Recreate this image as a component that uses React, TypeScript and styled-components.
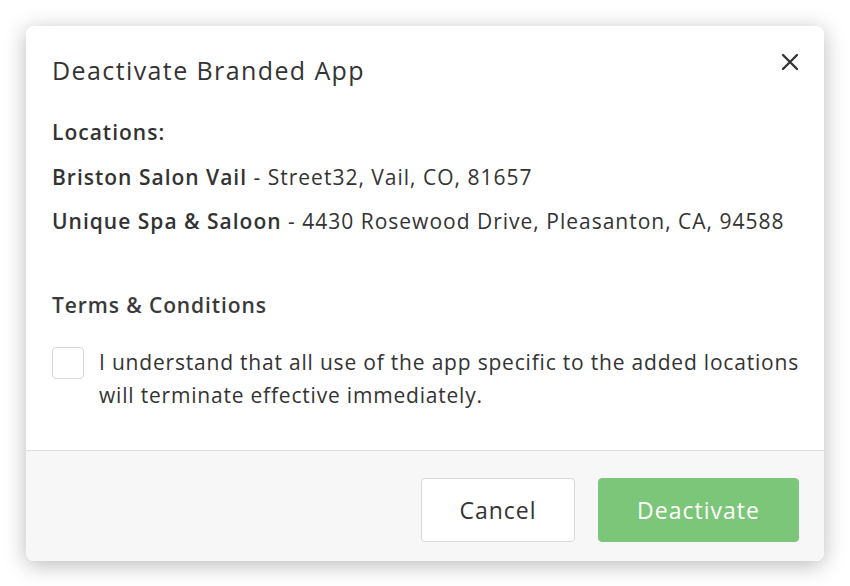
import styled, { createGlobalStyle } from "styled-components";

const GlobalStyle = createGlobalStyle`
  html, body {
    margin: 0;
    padding: 0;
    background: #ffffff;
    font-family: "Open Sans", "Lato", sans-serif;
    color: #333333;
  }
`;

const Page = styled.div`
  width: 850px;
  height: 586px;
  padding: 26px 26px 0 26px;
  box-sizing: border-box;
`;

const Modal = styled.div`
  width: 798px;
  height: 535px;
  background: #ffffff;
  border-radius: 8px;
  box-shadow: 0 4px 22px rgba(0, 0, 0, 0.28);
  display: flex;
  flex-direction: column;
  overflow: hidden;
`;

const Header = styled.div`
  display: flex;
  justify-content: space-between;
  align-items: flex-start;
  padding: 28px 22px 0 26px;
`;

const Title = styled.h2`
  margin: 0;
  font-size: 25px;
  font-weight: 400;
  line-height: 32px;
  letter-spacing: 1.4px;
`;

const CloseButton = styled.button`
  border: none;
  background: none;
  padding: 0;
  margin-top: -4px;
  width: 24px;
  height: 24px;
  display: flex;
  align-items: center;
  justify-content: center;
  cursor: pointer;
`;

const Body = styled.div`
  flex: 1;
  padding: 0 18px 0 26px;
  display: flex;
  flex-direction: column;
`;

const Line = styled.p<{ $top: number }>`
  margin: ${(p) => p.$top}px 0 0 0;
  font-size: 21px;
  line-height: 28px;
  letter-spacing: 1px;
  color: #333333;
  white-space: nowrap;
`;

const Strong = styled.span`
  font-weight: 600;
`;

const SectionTitle = styled.p`
  margin: 56px 0 0 0;
  font-size: 21px;
  line-height: 28px;
  letter-spacing: 0.9px;
  font-weight: 600;
  color: #3a3a3a;
`;

const CheckRow = styled.label`
  display: flex;
  gap: 15px;
  margin-top: 27px;
  cursor: pointer;
`;

const Box = styled.span`
  flex: none;
  width: 30px;
  height: 30px;
  border: 1px solid #d6d6d6;
  border-radius: 4px;
  background: #ffffff;
  margin-top: 1px;
`;

const CheckText = styled.span`
  font-size: 21px;
  line-height: 33px;
  letter-spacing: 0.8px;
`;

const Footer = styled.div`
  height: 111px;
  border-top: 1px solid #dedede;
  background: #f7f7f7;
  display: flex;
  justify-content: flex-end;
  align-items: flex-start;
  gap: 23px;
  padding: 27px 25px 0 0;
  box-sizing: border-box;
`;

const Button = styled.button<{ $primary?: boolean }>`
  height: 64px;
  width: ${(p) => (p.$primary ? "201px" : "154px")};
  border-radius: 4px;
  font-family: "Open Sans", "Lato", sans-serif;
  font-size: 23px;
  letter-spacing: 1px;
  cursor: pointer;
  border: 1px solid ${(p) => (p.$primary ? "#7cc67a" : "#d9d9d9")};
  background: ${(p) => (p.$primary ? "#7cc67a" : "#ffffff")};
  color: ${(p) => (p.$primary ? "#ffffff" : "#333333")};
`;

export default function App() {
  return (
    <>
      <GlobalStyle />
      <Page>
        <Modal>
          <Header>
            <Title>Deactivate Branded App</Title>
            <CloseButton aria-label="Close">
              <svg width="18" height="18" viewBox="0 0 18 18">
                <path d="M2 2 L16 16 M16 2 L2 16" stroke="#333" strokeWidth="2.4" strokeLinecap="round" />
              </svg>
            </CloseButton>
          </Header>
          <Body>
            <Line $top={32}>
              <Strong>Locations:</Strong>
            </Line>
            <Line $top={17}>
              <Strong>Briston Salon Vail</Strong> - Street32, Vail, CO, 81657
            </Line>
            <Line $top={16}>
              <Strong>Unique Spa &amp; Saloon</Strong> - 4430 Rosewood Drive, Pleasanton, CA, 94588
            </Line>
            <SectionTitle>Terms &amp; Conditions</SectionTitle>
            <CheckRow>
              <Box />
              <CheckText>
                I understand that all use of the app specific to the added locations will terminate effective immediately.
              </CheckText>
            </CheckRow>
          </Body>
          <Footer>
            <Button>Cancel</Button>
            <Button $primary>Deactivate</Button>
          </Footer>
        </Modal>
      </Page>
    </>
  );
}
